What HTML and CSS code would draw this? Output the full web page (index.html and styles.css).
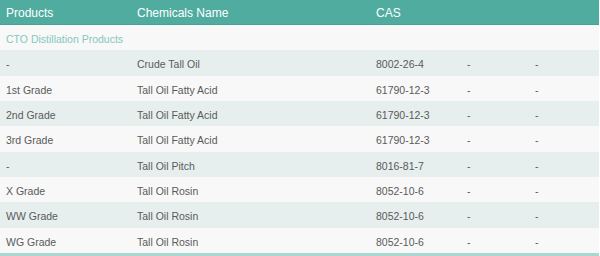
FILE: index.html
```html
<!DOCTYPE html>
<html>
<head>
<meta charset="utf-8">
<link rel="stylesheet" href="styles.css">
</head>
<body>
<div class="prod">
  <div class="row head"><div>Products</div><div>Chemicals Name</div><div>CAS</div><div></div><div></div></div>
  <div class="row group"><div class="span">CTO Distillation Products</div></div>
  <div class="row alt"><div>-</div><div>Crude Tall Oil</div><div>8002-26-4</div><div>-</div><div>-</div></div>
  <div class="row"><div>1st Grade</div><div>Tall Oil Fatty Acid</div><div>61790-12-3</div><div>-</div><div>-</div></div>
  <div class="row alt"><div>2nd Grade</div><div>Tall Oil Fatty Acid</div><div>61790-12-3</div><div>-</div><div>-</div></div>
  <div class="row"><div>3rd Grade</div><div>Tall Oil Fatty Acid</div><div>61790-12-3</div><div>-</div><div>-</div></div>
  <div class="row alt"><div>-</div><div>Tall Oil Pitch</div><div>8016-81-7</div><div>-</div><div>-</div></div>
  <div class="row"><div>X Grade</div><div>Tall Oil Rosin</div><div>8052-10-6</div><div>-</div><div>-</div></div>
  <div class="row alt"><div>WW Grade</div><div>Tall Oil Rosin</div><div>8052-10-6</div><div>-</div><div>-</div></div>
  <div class="row"><div>WG Grade</div><div>Tall Oil Rosin</div><div>8052-10-6</div><div>-</div><div>-</div></div>
</div>
</body>
</html>
```
FILE: styles.css
```css
html, body {
  margin: 0;
  padding: 0;
  background: #ffffff;
}
.prod {
  width: 599px;
  font-family: "Liberation Sans", Arial, sans-serif;
  border-bottom: 3px solid #a9d6ce;
  display: flex;
  flex-direction: column;
}
.row {
  display: grid;
  grid-template-columns: 131px 239px 91px 68px 70px;
  height: 25.33px;
  align-items: center;
  background: #f8f8f8;
  color: #5a5a5a;
  font-size: 10.5px;
  white-space: nowrap;
}
.row > div {
  padding: 3px 0 0 6px;
}
.row.alt {
  background: #e6efed;
}
.row.group {
  color: #86c8bd;
}
.row .span {
  grid-column: 1 / -1;
}
.row.head {
  height: 25px;
  box-sizing: border-box;
  background: #4fac9f;
  color: #ffffff;
  font-size: 12px;
  border-bottom: 1px solid #47a294;
}
.row.head > div {
  padding-top: 1px;
}
```
